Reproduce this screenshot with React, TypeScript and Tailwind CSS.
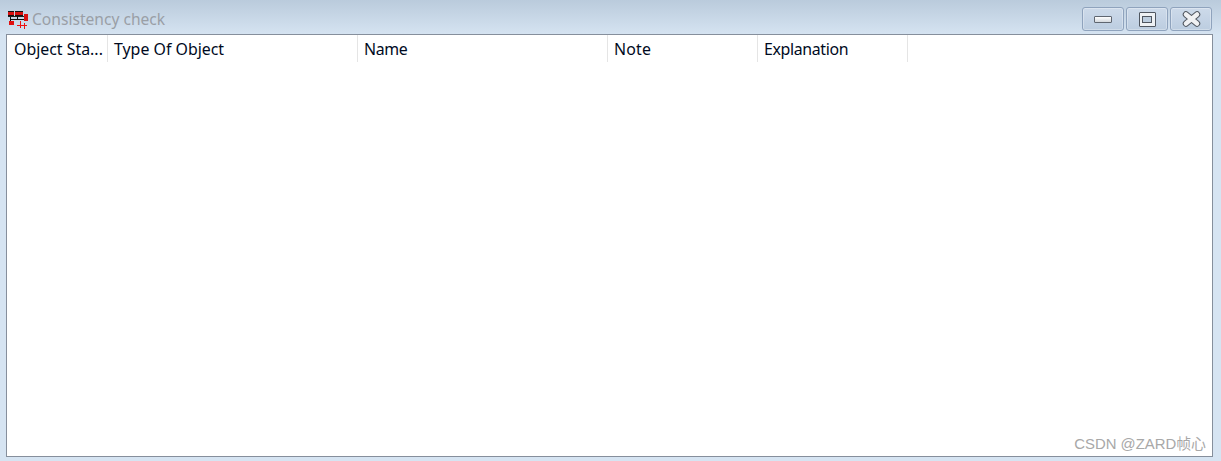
import React from "react";

const columns = [
  { label: "Object Sta...", width: "w-[101px] pl-[7px]" },
  { label: "Type Of Object", width: "w-[250px] pl-[6px]" },
  { label: "Name", width: "w-[250px] pl-[6px] tracking-[-0.4px]" },
  { label: "Note", width: "w-[150px] pl-[6px] tracking-[0.2px]" },
  { label: "Explanation", width: "w-[150px] pl-[6px] tracking-[-0.35px]" },
];

function AppIcon() {
  return (
    <svg width="21" height="20" viewBox="0 0 21 20" shapeRendering="crispEdges" className="shrink-0">
      {/* top blocks */}
      <rect x="0" y="1" width="6" height="5" fill="#111" />
      <rect x="7" y="1" width="8" height="5" fill="#111" />
      <rect x="0" y="2" width="6" height="3" fill="#d81010" />
      <rect x="7" y="2" width="8" height="3" fill="#d81010" />
      {/* right block */}
      <rect x="16" y="4" width="4" height="7" fill="#d81010" />
      {/* connectors */}
      <rect x="0" y="6" width="16" height="1" fill="#222" />
      <rect x="2" y="7" width="1" height="4" fill="#111" />
      <rect x="9" y="6" width="1" height="4" fill="#111" />
      <rect x="2" y="9" width="14" height="1" fill="#111" />
      {/* lower block */}
      <rect x="1" y="11" width="5" height="4" fill="#e01010" />
      {/* red crosses */}
      <rect x="9" y="15" width="10" height="1" fill="#ee1111" />
      <rect x="12" y="11" width="1" height="7" fill="#ee1111" />
      <rect x="16" y="13" width="1" height="6" fill="#ee1111" />
    </svg>
  );
}

function CaptionButton({ children }: { children: React.ReactNode }) {
  return (
    <div className="flex h-[24px] w-[42px] items-center justify-center rounded-[3px] border border-[#8fa3bd] bg-gradient-to-b from-[#cddaea] to-[#bccde0] shadow-[inset_0_0_0_1px_rgba(255,255,255,0.3)]">
      {children}
    </div>
  );
}

export default function App() {
  return (
    <div className="relative flex h-[461px] w-[1221px] flex-col overflow-hidden bg-[#d6e4f2] font-['Noto_Sans',sans-serif]">
      {/* Title bar */}
      <div className="flex h-[34px] shrink-0 items-start bg-gradient-to-b from-[#bacbdc] to-[#d5e3f1] pl-[8px] pr-[9px]">
        <div className="mt-[10px] flex items-center gap-[3px]">
          <AppIcon />
          <span className="relative -top-px text-[15.6px] leading-[20px] text-[#9a9fa6]">Consistency check</span>
        </div>
        <div className="ml-auto mt-[7px] flex gap-[2px]">
          <CaptionButton>
            <div className="h-[7px] w-[18px] rounded-[1px] border border-[#5f6670] bg-gradient-to-b from-white to-[#d4d8dd]" />
          </CaptionButton>
          <CaptionButton>
            <div className="flex h-[15px] w-[17px] items-center justify-center rounded-[1px] border border-[#4f5660] bg-[#eef1f4]">
              <div className="h-[7px] w-[10px] border border-[#4f5660] bg-[#bccddf]" />
            </div>
          </CaptionButton>
          <CaptionButton>
            <svg width="19" height="16" viewBox="0 0 19 16">
              <path d="M4 3.5 L15 12.5 M15 3.5 L4 12.5" stroke="#50565f" strokeWidth="6.5" strokeLinecap="round" />
              <path d="M4 3.5 L15 12.5 M15 3.5 L4 12.5" stroke="#f0f1f3" strokeWidth="4.5" strokeLinecap="round" />
            </svg>
          </CaptionButton>
        </div>
      </div>

      {/* List panel */}
      <div className="ml-[6px] mr-[8px] h-[423px] border border-[#868f9c] bg-white">
        <div className="flex h-[27px] items-stretch">
          {columns.map((col) => (
            <div
              key={col.label}
              className={`${col.width} flex items-center border-r border-[#e5e5e5] pt-[2px] text-[15.9px] text-[#000a1e]`}
            >
              {col.label}
            </div>
          ))}
        </div>
      </div>

      {/* Watermark */}
      <span className="absolute bottom-[7px] right-[15px] text-[14.9px] leading-[20px] text-[#a8a8a8] font-['Liberation_Sans','Noto_Sans_CJK_SC',sans-serif]">
        CSDN @ZARD帧心
      </span>
    </div>
  );
}
